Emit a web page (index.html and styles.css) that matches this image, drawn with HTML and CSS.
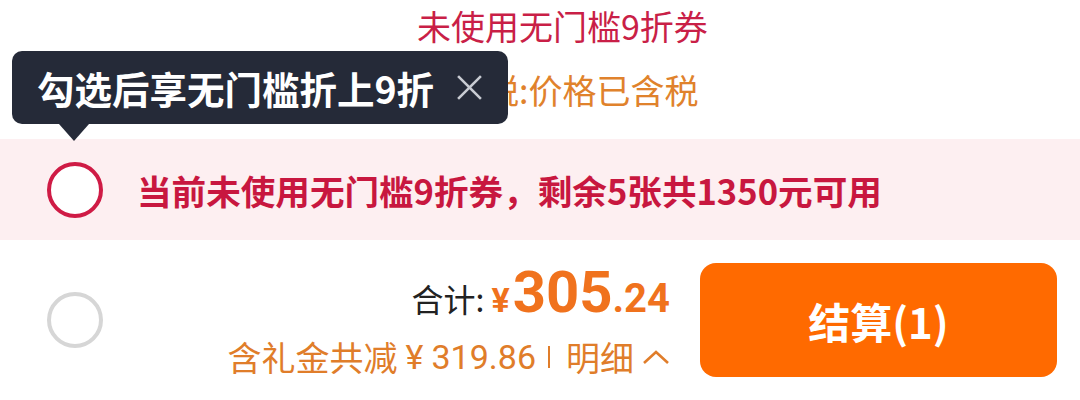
FILE: index.html
```html
<!DOCTYPE html>
<html lang="zh-CN">
<head>
    <meta charset="UTF-8">
    <meta name="viewport" content="width=device-width, initial-scale=1.0">
    <title>结算</title>
    <link rel="stylesheet" href="styles.css">
</head>
<body>
    <div class="notes">
        <p class="coupon-note">未使用无门槛9折券</p>
        <p class="tax-note">进口税:价格已含税</p>
    </div>
    <div class="tip">
        <span class="tip-text">勾选后享无门槛折上9折</span>
        <svg class="tip-close" viewBox="0 0 26 26">
            <line x1="2" y1="2" x2="24" y2="24"></line>
            <line x1="24" y1="2" x2="2" y2="24"></line>
        </svg>
    </div>
    <div class="coupon-bar">
        <span class="radio radio-red"></span>
        <span class="coupon-text">当前未使用无门槛9折券，剩余5张共1350元可用</span>
    </div>
    <div class="checkout-bar">
        <span class="radio"></span>
        <div class="total">
            <div class="total-line">
                <span class="total-label">合计:</span><span class="yen">¥</span><span class="price-int">305</span><span class="price-dec">.24</span>
            </div>
            <div class="discount-line">
                <span>含礼金共减</span>
                <span class="num">¥</span>
                <span class="num">319.86</span>
                <span class="sep"></span>
                <span>明细</span>
                <svg class="caret" viewBox="0 0 28 16"><polyline points="2,14 14,3 26,14"></polyline></svg>
            </div>
        </div>
        <button class="pay-button">结算(1)</button>
    </div>
</body>
</html>
```

FILE: styles.css
```css
body{
    margin: 0;
    font-family: "Noto Sans CJK SC", "Noto Sans", sans-serif;
    background-color: white;
    width: 1080px;
    height: 400px;
    overflow: hidden;
    position: relative;
}
p{
    margin: 0;
}
.notes{
    padding-left: 417px;
    height: 139px;
}
.coupon-note{
    font-size: 34px;
    line-height: 52px;
    color: #c91f47;
}
.tax-note{
    font-size: 34px;
    line-height: 76px;
    color: #e0822c;
}
.tip{
    position: absolute;
    left: 12px;
    top: 51px;
    width: 496px;
    height: 73px;
    box-sizing: border-box;
    padding-left: 25px;
    padding-right: 25px;
    background-color: #252a38;
    border-radius: 10px;
    display: flex;
    align-items: center;
    justify-content: space-between;
}
.tip::after{
    content: "";
    position: absolute;
    left: 47px;
    top: 73px;
    border-left: 15px solid transparent;
    border-right: 15px solid transparent;
    border-top: 17px solid #252a38;
}
.tip-text{
    color: white;
    font-size: 37.5px;
    font-weight: 700;
}
.tip-close{
    width: 27px;
    height: 27px;
}
.tip-close line{
    stroke: #c9ccd3;
    stroke-width: 2.5;
}
.radio{
    display: inline-block;
    width: 56px;
    height: 56px;
    box-sizing: border-box;
    border: 4px solid #d6d6d6;
    border-radius: 50%;
    background-color: white;
    flex-shrink: 0;
}
.radio-red{
    border-width: 4.5px;
    border-color: #cf1b45;
}
.coupon-bar{
    height: 101px;
    background-color: #fdeff1;
    display: flex;
    align-items: center;
    padding-left: 47px;
    gap: 34px;
}
.coupon-text{
    font-size: 34.6px;
    font-weight: 700;
    color: #c8173f;
}
.checkout-bar{
    height: 160px;
    display: flex;
    align-items: center;
    padding-left: 47px;
    padding-right: 23px;
}
.total{
    margin-left: auto;
    margin-right: 30px;
    display: flex;
    flex-direction: column;
    align-items: flex-end;
}
.total-line{
    line-height: 60px;
    white-space: nowrap;
}
.total-label{
    font-size: 32px;
    color: #222;
}
.yen{
    font-family: Roboto, sans-serif;
    font-size: 34px;
    font-weight: 700;
    color: #f0721d;
    margin-left: 7px;
    margin-right: 3px;
}
.price-int{
    font-family: "Liberation Sans Narrow", Roboto, sans-serif;
    font-size: 58px;
    font-weight: 700;
    color: #f0721d;
}
.price-dec{
    font-family: "Liberation Sans Narrow", Roboto, sans-serif;
    font-size: 40px;
    font-weight: 700;
    color: #f0721d;
}
.discount-line{
    font-size: 34px;
    line-height: 44px;
    color: #e07d2a;
    display: flex;
    align-items: center;
    gap: 8px;
}
.num{
    font-family: Roboto, sans-serif;
}
.sep{
    width: 2px;
    height: 22px;
    background-color: #e07d2a;
    margin-left: 4px;
    margin-right: 8px;
}
.caret{
    width: 28px;
    height: 16px;
}
.caret polyline{
    fill: none;
    stroke: #e07d2a;
    stroke-width: 2.6;
}
.pay-button{
    width: 357px;
    height: 114px;
    border: none;
    border-radius: 16px;
    background-color: #ff6a00;
    color: white;
    font-family: "Noto Sans CJK SC", sans-serif;
    font-size: 42px;
    font-weight: 700;
    cursor: pointer;
}
```
